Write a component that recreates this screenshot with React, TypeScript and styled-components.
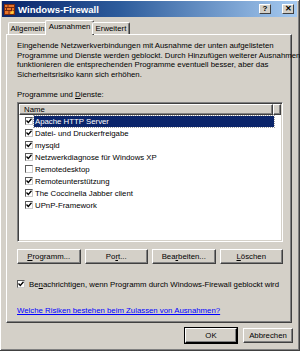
import React from "react";
import styled, { createGlobalStyle, css } from "styled-components";

const GlobalStyle = createGlobalStyle`
  html, body {
    margin: 0;
    padding: 0;
    background: #d4d0c8;
  }
  body {
    font-family: "Liberation Sans", Arial, sans-serif;
    font-size: 7.8px;
    color: #000;
  }
`;

const Window = styled.div`
  width: 300px;
  height: 351px;
  box-sizing: border-box;
  padding: 1px 2px 2px;
  background: #d4d0c8;
  border-right: 1px solid #404040;
  border-bottom: 1px solid #404040;
  box-shadow: inset 1px 1px #fff, inset -1px -1px #808080;
  display: flex;
  flex-direction: column;
`;

const TitleBar = styled.div`
  height: 16px;
  display: flex;
  align-items: center;
  padding: 0 3px 0 2px;
  background: linear-gradient(to right, #0a246a 0%, #2d5c9c 40%, #a6caf0 100%);
`;

const Title = styled.span`
  margin-left: 3px;
  color: #fff;
  font-weight: bold;
  font-size: 9.6px;
  flex: 1;
`;

const CaptionButton = styled.span<{ $gap?: number }>`
  width: 12px;
  height: 10px;
  margin-left: ${({ $gap }) => $gap ?? 0}px;
  box-sizing: border-box;
  background: #d4d0c8;
  border-top: 1px solid #fff;
  border-left: 1px solid #fff;
  border-right: 1px solid #404040;
  border-bottom: 1px solid #404040;
  display: flex;
  align-items: center;
  justify-content: center;
  font-size: 8px;
  font-weight: bold;
  line-height: 1;
`;

const TabRow = styled.div`
  display: flex;
  align-items: flex-end;
  height: 14px;
  margin: 3px 0 0 4px;
  padding-left: 2px;
  position: relative;
  z-index: 1;
`;

const Tab = styled.div<{ $active?: boolean; $width: number }>`
  width: ${({ $width }) => $width}px;
  box-sizing: border-box;
  height: 12px;
  background: #d4d0c8;
  border-top: 1px solid #fff;
  border-left: 1px solid #fff;
  border-right: 1px solid #404040;
  box-shadow: inset -1px 0 #808080;
  border-radius: 2px 2px 0 0;
  display: flex;
  align-items: center;
  justify-content: center;
  line-height: 1;
  white-space: nowrap;
  ${({ $active }) =>
    $active &&
    css`
      height: 15px;
      margin: 0 -2px -1px;
      padding-bottom: 2px;
    `}
`;

const Panel = styled.div`
  margin: 0 5px 0 4px;
  height: 289px;
  box-sizing: border-box;
  border-top: 1px solid #fff;
  border-left: 1px solid #fff;
  border-right: 1px solid #404040;
  border-bottom: 1px solid #404040;
  box-shadow: inset -1px -1px #808080;
  padding: 6px 8px 0 10px;
  display: flex;
  flex-direction: column;
`;

const Intro = styled.p`
  margin: 0;
  line-height: 9.5px;
  white-space: nowrap;
`;

const Label = styled.div`
  margin-top: 11px;
  line-height: 10px;
`;

const ListBox = styled.div`
  margin-top: 2px;
  height: 140px;
  box-sizing: border-box;
  background: #fff;
  border-top: 1px solid #808080;
  border-left: 1px solid #808080;
  border-right: 1px solid #fff;
  border-bottom: 1px solid #fff;
  box-shadow: inset 1px 1px #404040, inset -1px -1px #d4d0c8;
  padding: 1px;
`;

const HeaderRow = styled.div`
  display: flex;
  height: 11px;
`;

const HeaderCell = styled.div<{ $width?: number }>`
  ${({ $width }) => ($width ? `width: ${$width}px;` : "flex: 1;")}
  box-sizing: border-box;
  background: #d4d0c8;
  border-top: 1px solid #fff;
  border-left: 1px solid #fff;
  border-right: 1px solid #404040;
  border-bottom: 1px solid #404040;
  box-shadow: inset -1px -1px #808080;
  padding-left: 4px;
  line-height: 9px;
`;

const Row = styled.div`
  display: flex;
  align-items: center;
  height: 12px;
  padding-left: 6px;
`;

const Box = styled.span`
  width: 8px;
  height: 8px;
  box-sizing: border-box;
  background: #fff;
  border-top: 1px solid #5a5a5a;
  border-left: 1px solid #5a5a5a;
  border-right: 1px solid #c8c8c8;
  border-bottom: 1px solid #c8c8c8;
  display: flex;
  align-items: center;
  justify-content: center;
  flex: none;
`;

const ItemText = styled.span<{ $selected?: boolean }>`
  margin-left: 1px;
  width: 240px;
  height: 11px;
  line-height: 11px;
  padding-left: 1px;
  box-sizing: border-box;
  white-space: nowrap;
  ${({ $selected }) =>
    $selected &&
    css`
      background: #0a246a;
      color: #fff;
      outline: 1px dotted #a0a0a0;
    `}
`;

const ButtonRow = styled.div`
  margin-top: 7px;
  display: grid;
  grid-template-columns: repeat(4, 1fr);
  column-gap: 4px;
`;

const Button = styled.button<{ $default?: boolean; $width?: number }>`
  font: inherit;
  color: #000;
  height: 15px;
  ${({ $width }) => $width && `width: ${$width}px;`}
  padding: 0;
  box-sizing: border-box;
  background: #d4d0c8;
  border-top: 1px solid #fff;
  border-left: 1px solid #fff;
  border-right: 1px solid #404040;
  border-bottom: 1px solid #404040;
  box-shadow: inset -1px -1px #808080;
  line-height: 1;
  white-space: nowrap;
  ${({ $default }) =>
    $default &&
    css`
      outline: 1px solid #000;
      outline-offset: 0;
      border-right-color: #000;
      border-bottom-color: #000;
    `}
`;

const CheckLine = styled.label`
  margin-top: 15px;
  display: flex;
  align-items: center;
  height: 10px;
  gap: 4px;
  white-space: nowrap;
`;

const HelpLink = styled.a`
  margin-top: 17px;
  color: #0000ff;
  text-decoration: underline;
  line-height: 10px;
  white-space: nowrap;
`;

const Footer = styled.div`
  display: flex;
  justify-content: flex-end;
  gap: 6px;
  padding: 5px 4px 0 0;
`;

const Check = () => (
  <svg width="6" height="6" viewBox="0 0 6 6">
    <path d="M0.5 2.5 L2.3 4.5 L5.5 0.8" stroke="#000" strokeWidth="1.3" fill="none" />
  </svg>
);

const Checkbox = ({ checked }: { checked: boolean }) => <Box>{checked && <Check />}</Box>;

const FirewallIcon = () => (
  <svg width="11" height="11" viewBox="0 0 11 11">
    <rect x="0" y="0" width="11" height="11" fill="#c8461e" />
    <rect x="0.5" y="0.5" width="10" height="10" fill="#e8742a" stroke="#7a2a10" strokeWidth="1" />
    <path d="M0.5 3.5 H10.5 M0.5 6.5 H10.5 M4 0.5 V3.5 M7.5 3.5 V6.5 M2.5 3.5 V6.5 M5 6.5 V10.5" stroke="#7a2a10" strokeWidth="1" />
    <path d="M6 9.5 C7 7 9 8 8.5 5.5 C10 7 10 9.5 8.5 10" fill="#ffd23a" />
  </svg>
);

const items = [
  { name: "Apache HTTP Server", checked: true },
  { name: "Datei- und Druckerfreigabe", checked: true },
  { name: "mysqld", checked: true },
  { name: "Netzwerkdiagnose für Windows XP", checked: true },
  { name: "Remotedesktop", checked: false },
  { name: "Remoteunterstützung", checked: true },
  { name: "The Coccinella Jabber client", checked: true },
  { name: "UPnP-Framework", checked: true },
];

export default function App() {
  return (
    <>
      <GlobalStyle />
      <Window>
        <TitleBar>
          <FirewallIcon />
          <Title>Windows-Firewall</Title>
          <CaptionButton>?</CaptionButton>
          <CaptionButton $gap={11}>✕</CaptionButton>
        </TitleBar>
        <TabRow>
          <Tab $width={39}>Allgemein</Tab>
          <Tab $width={49} $active>
            Ausnahmen
          </Tab>
          <Tab $width={38}>Erweitert</Tab>
        </TabRow>
        <Panel>
          <Intro>
            Eingehende Netzwerkverbindungen mit Ausnahme der unten aufgelisteten
            <br />
            Programme und Dienste werden geblockt. Durch Hinzufügen weiterer Ausnahmen
            <br />
            funktionieren die entsprechenden Programme eventuell besser, aber das
            <br />
            Sicherheitsrisiko kann sich erhöhen.
          </Intro>
          <Label>
            Programme und <u>D</u>ienste:
          </Label>
          <ListBox>
            <HeaderRow>
              <HeaderCell $width={254}>Name</HeaderCell>
              <HeaderCell />
            </HeaderRow>
            {items.map((item, i) => (
              <Row key={item.name}>
                <Checkbox checked={item.checked} />
                <ItemText $selected={i === 0}>{item.name}</ItemText>
              </Row>
            ))}
          </ListBox>
          <ButtonRow>
            <Button>
              <u>P</u>rogramm...
            </Button>
            <Button>
              Po<u>r</u>t...
            </Button>
            <Button>
              Bea<u>r</u>beiten...
            </Button>
            <Button>
              <u>L</u>öschen
            </Button>
          </ButtonRow>
          <CheckLine>
            <Checkbox checked />
            <span>
              Be<u>n</u>achrichtigen, wenn Programm durch Windows-Firewall geblockt wird
            </span>
          </CheckLine>
          <HelpLink href="#">Welche Risiken bestehen beim Zulassen von Ausnahmen?</HelpLink>
        </Panel>
        <Footer>
          <Button $default $width={52}>
            OK
          </Button>
          <Button $width={50}>Abbrechen</Button>
        </Footer>
      </Window>
    </>
  );
}
